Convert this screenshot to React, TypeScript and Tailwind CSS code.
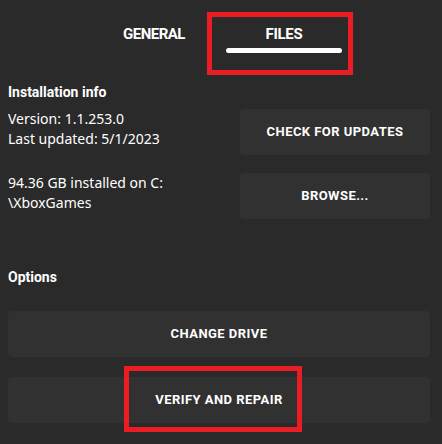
import React from "react";

const bold = { fontFamily: "Roboto, 'DejaVu Sans', sans-serif" };

function Btn({ label, className = "" }: { label: string; className?: string }) {
  return (
    <div
      className={`h-[46px] rounded-[4px] bg-[#313131] flex items-center justify-center text-white font-bold text-[13px] tracking-[0.45px] ${className}`}
      style={bold}
    >
      {label}
    </div>
  );
}

export default function App() {
  return (
    <div
      className="relative w-[442px] h-[444px] bg-[#2a2a2a] overflow-hidden text-white"
      style={{ fontFamily: "'Noto Sans', 'Open Sans', sans-serif" }}
    >
      {/* Tabs */}
      <div className="flex pl-[89px] pt-[24px] h-[80px]">
        <div className="w-[130px] flex flex-col items-center">
          <span className="font-bold text-[15px] leading-[20px] tracking-[-0.5px]" style={bold}>
            GENERAL
          </span>
        </div>
        <div className="w-[130px] flex flex-col items-center">
          <span className="font-bold text-[15px] leading-[20px] tracking-[-0.3px]" style={bold}>
            FILES
          </span>
          <div className="mt-[4px] w-[116px] h-[5px] rounded-full bg-white" />
        </div>
      </div>

      <div className="pl-[8px] pr-[12px]">
        <div className="font-bold text-[14px] leading-[20px] mt-[2px]" style={bold}>
          Installation info
        </div>
        <div className="mt-[7px] flex flex-col gap-[18px]">
          <div className="flex">
            <div className="flex-1 text-[14px] leading-[20px]">
              <div>Version: 1.1.253.0</div>
              <div>Last updated: 5/1/2023</div>
            </div>
            <Btn label="CHECK FOR UPDATES" className="w-[190px]" />
          </div>
          <div className="flex">
            <div className="flex-1 text-[14px] leading-[20px]">
              <div>94.36 GB installed on C:</div>
              <div>\XboxGames</div>
            </div>
            <Btn label="BROWSE..." className="w-[190px]" />
          </div>
        </div>
        <div className="font-bold text-[14px] leading-[20px] mt-[48px]" style={bold}>
          Options
        </div>
        <div className="mt-[24px] flex flex-col gap-[20px]">
          <Btn label="CHANGE DRIVE" />
          <Btn label="VERIFY AND REPAIR" />
        </div>
      </div>

      {/* annotation boxes */}
      <div className="absolute left-[207px] top-[12px] w-[146px] h-[63px] border-[5px] border-[#ec1c24]" />
      <div className="absolute left-[124px] top-[366px] w-[178px] h-[66px] border-[5px] border-[#ec1c24]" />
    </div>
  );
}
